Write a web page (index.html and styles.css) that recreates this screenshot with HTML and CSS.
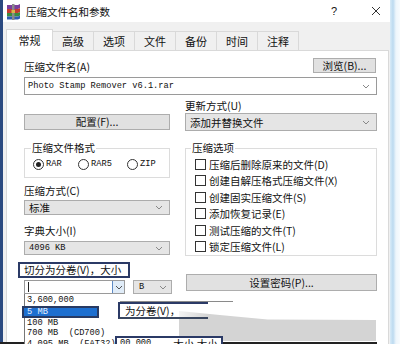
FILE: index.html
```html
<!DOCTYPE html>
<html>
<head>
<meta charset="utf-8">
<link rel="stylesheet" href="styles.css">
</head>
<body>
<div class="screen">
    <div class="edge-left"></div>
    <div class="dialog">
        <div class="titlebar">
            <svg class="app-icon" width="17" height="17" viewBox="0 0 17 17">
                <path d="M2 2h11l2 -1v4l-2 1H2z" fill="#7b3e9c"/>
                <path d="M2 6h11l2 -1v4l-2 1H2z" fill="#c43b32"/>
                <path d="M2 10h11l2 -1v3.5l-2 1H2z" fill="#3b8c3f"/>
                <path d="M2 13.5h11l2 -1v3l-2 1H2z" fill="#2f5db3"/>
                <rect x="7" y="1" width="2.5" height="16" fill="#8a8a8a"/>
                <rect x="6.5" y="7" width="3.5" height="3" fill="#d9b74a"/>
            </svg>
            <span class="title">压缩文件名和参数</span>
            <span class="help">?</span>
            <svg class="close" width="10" height="10" viewBox="0 0 10 10">
                <path d="M1 1l8 8M9 1l-8 8" stroke="#333" stroke-width="1"/>
            </svg>
        </div>
        <div class="tabs">
            <div class="tab active">常规</div>
            <div class="tab">高级</div>
            <div class="tab">选项</div>
            <div class="tab">文件</div>
            <div class="tab">备份</div>
            <div class="tab">时间</div>
            <div class="tab">注释</div>
        </div>
        <div class="page">
            <div class="row-name">
                <span class="lbl">压缩文件名(A)</span>
                <div class="btn browse">浏览(B)...</div>
            </div>
            <div class="combo edit name">
                <span class="mono">Photo Stamp Remover v6.1.rar</span>
                <svg class="chev" width="8" height="5" viewBox="0 0 8 5"><path d="M1 1l3 3 3-3" fill="none" stroke="#888"/></svg>
            </div>
            <div class="cols">
                <div class="col">
                    <div class="btn profile">配置(F)...</div>
                    <div class="group format">
                        <span class="group-title">压缩文件格式</span>
                        <div class="radios">
                            <div class="radio r1"><span class="dot on"></span><span class="mono">RAR</span></div>
                            <div class="radio r2"><span class="dot"></span><span class="mono">RAR5</span></div>
                            <div class="radio"><span class="dot"></span><span class="mono">ZIP</span></div>
                        </div>
                    </div>
                    <div class="lbl method-lbl">压缩方式(C)</div>
                    <div class="combo method">
                        <span>标准</span>
                        <svg class="chev" width="8" height="5" viewBox="0 0 8 5"><path d="M1 1l3 3 3-3" fill="none" stroke="#888"/></svg>
                    </div>
                    <div class="lbl dict-lbl">字典大小(I)</div>
                    <div class="combo dict">
                        <span class="mono">4096 KB</span>
                        <svg class="chev" width="8" height="5" viewBox="0 0 8 5"><path d="M1 1l3 3 3-3" fill="none" stroke="#888"/></svg>
                    </div>
                </div>
                <div class="col">
                    <div class="lbl update-lbl">更新方式(U)</div>
                    <div class="combo update">
                        <span>添加并替换文件</span>
                        <svg class="chev" width="8" height="5" viewBox="0 0 8 5"><path d="M1 1l3 3 3-3" fill="none" stroke="#888"/></svg>
                    </div>
                    <div class="group options">
                        <span class="group-title">压缩选项</span>
                        <div class="check"><span class="box"></span>压缩后删除原来的文件(D)</div>
                        <div class="check"><span class="box"></span>创建自解压格式压缩文件(X)</div>
                        <div class="check"><span class="box"></span>创建固实压缩文件(S)</div>
                        <div class="check"><span class="box"></span>添加恢复记录(E)</div>
                        <div class="check"><span class="box"></span>测试压缩的文件(T)</div>
                        <div class="check"><span class="box"></span>锁定压缩文件(L)</div>
                    </div>
                </div>
            </div>
            <div class="cols bottom">
                <div class="col">
                    <div class="mark">切分为分卷(V)，大小</div>
                    <div class="size-row">
                        <div class="size-wrap">
                            <div class="combo edit size">
                                <span class="caret"></span>
                                <span class="drop-btn">
                                    <svg width="8" height="5" viewBox="0 0 8 5"><path d="M1 1l3 3 3-3" fill="none" stroke="#555"/></svg>
                                </span>
                            </div>
                            <div class="popup">
                                <div class="item">3,600,000</div>
                                <div class="item picked">5 MB</div>
                                <div class="item">100 MB</div>
                                <div class="item">700 MB  (CD700)</div>
                                <div class="item">4,095 MB  (FAT32)</div>
                            </div>
                        </div>
                        <div class="combo unit">
                            <span class="mono">B</span>
                            <svg class="chev" width="8" height="5" viewBox="0 0 8 5"><path d="M1 1l3 3 3-3" fill="none" stroke="#888"/></svg>
                        </div>
                    </div>
                </div>
                <div class="col">
                    <div class="btn password">设置密码(P)...</div>
                </div>
            </div>
            <div class="ghost-line"></div>
            <div class="ghost-mark">为分卷(V)，</div>
            <div class="ghost-band"></div>
            <div class="ghost-low"><span class="mono">00,000</span><span class="low-text">大小 大小</span></div>
        </div>
    </div>
    <div class="edge-right"></div>
    <div class="edge-bottom"></div>
</div>
</body>
</html>
```

FILE: styles.css
```css
* {
    box-sizing: border-box;
}
body {
    margin: 0;
    font-family: "Noto Sans CJK SC", sans-serif;
    font-size: 10.5px;
    color: #111;
}
.screen {
    position: relative;
    width: 400px;
    height: 344px;
    overflow: hidden;
    display: flex;
    background: #f0f0f0;
}
.edge-left {
    width: 3px;
    flex: none;
    background: #2b4a80;
}
.edge-right {
    width: 10px;
    flex: none;
    background: linear-gradient(90deg, #d8ebf8 0%, #bcdaf0 30%, #eef6fc 60%, #f7fbfe 100%);
}
.edge-bottom {
    position: absolute;
    left: 0;
    bottom: 0;
    width: 377px;
    height: 2px;
    background: #222;
}
.dialog {
    width: 387px;
    flex: none;
    background: #f0f0f0;
}
.titlebar {
    height: 22px;
    background: #fff;
    display: flex;
    align-items: center;
}
.app-icon {
    margin-left: 2px;
    margin-top: 1px;
}
.title {
    margin-left: 4px;
    font-size: 10.5px;
}
.help {
    margin-left: auto;
    font-family: "Liberation Sans", sans-serif;
    font-size: 11px;
}
.close {
    margin-left: 34px;
    margin-right: 9px;
}
.tabs {
    display: flex;
    align-items: flex-end;
    height: 28px;
    padding-left: 3px;
    position: relative;
    z-index: 1;
}
.tab {
    height: 19px;
    padding: 0 9px;
    width: 41px;
    border: 1px solid #d9d9d9;
    border-bottom: none;
    border-left: none;
    background: #f0f0f0;
    font-size: 11px;
    line-height: 18px;
    text-align: center;
}
.tab.active {
    width: 47px;
    height: 22px;
    background: #fff;
    border-left: 1px solid #d9d9d9;
    margin-bottom: -1px;
    line-height: 21px;
}
.page {
    position: relative;
    margin-left: 3px;
    width: 383px;
    height: 300px;
    background: #fff;
    border: 1px solid #d9d9d9;
    padding: 7px 11px 0 17px;
}
.mono {
    font-family: "Liberation Mono", monospace;
    font-size: 8.7px;
}
.lbl {
    line-height: 14px;
}
.row-name {
    display: flex;
    align-items: flex-end;
    justify-content: space-between;
    height: 15px;
}
.row-name .lbl {
    line-height: 12px;
}
.btn {
    background: #e1e1e1;
    border: 1px solid #adadad;
    text-align: center;
}
.browse {
    width: 63px;
    height: 15px;
    line-height: 13px;
    margin-right: 1px;
}
.combo {
    display: flex;
    align-items: center;
    justify-content: space-between;
    background: #e5e5e5;
    border: 1px solid #acacac;
    padding: 0 6px 0 4px;
}
.combo.edit {
    background: #fff;
    border-color: #9a9a9a;
}
.name {
    margin-top: 4px;
    height: 18px;
    padding-left: 3px;
}
.cols {
    display: grid;
    grid-template-columns: 146px 192px;
    column-gap: 15px;
}
.col {
    display: flex;
    flex-direction: column;
}
.profile {
    margin-top: 19px;
    height: 16px;
    line-height: 14px;
}
.group {
    border: 1px solid #dcdcdc;
}
.group-title {
    display: inline-block;
    align-self: flex-start;
    margin-top: -8px;
    padding: 0 1px;
    line-height: 14px;
    background: #fff;
}
.format {
    display: flex;
    flex-direction: column;
    margin-top: 18px;
    padding: 0 0 7px 8px;
}
.format .group-title {
    margin-left: -2px;
}
.radios {
    display: flex;
    margin-top: 3px;
    height: 12px;
}
.radio {
    display: flex;
    align-items: center;
    gap: 2px;
}
.r1 {
    width: 45px;
}
.r2 {
    width: 49px;
}
.dot {
    width: 11px;
    height: 11px;
    border: 1px solid #333;
    border-radius: 50%;
    display: flex;
    align-items: center;
    justify-content: center;
}
.dot.on::after {
    content: "";
    width: 5px;
    height: 5px;
    border-radius: 50%;
    background: #222;
}
.method-lbl {
    margin-top: 6px;
}
.method {
    margin-top: 2px;
    height: 15px;
}
.dict-lbl {
    margin-top: 9px;
}
.dict {
    margin-top: 3px;
    height: 14px;
}
.update-lbl {
    margin-top: 4px;
}
.update {
    height: 18px;
}
.options {
    display: flex;
    flex-direction: column;
    margin-top: 17px;
    height: 108px;
    padding-left: 9px;
}
.options .group-title {
    margin-left: -4px;
    margin-bottom: 1px;
}
.check {
    display: flex;
    align-items: center;
    height: 16.6px;
}
.box {
    width: 11px;
    height: 11px;
    border: 1px solid #333;
    margin-right: 3px;
}
.bottom {
    margin-top: 6px;
}
.mark {
    margin-left: -6px;
    width: 112px;
    height: 16px;
    border: 2px solid #2b3a66;
    line-height: 12px;
    padding-left: 4px;
    font-size: 10.5px;
}
.size-row {
    display: flex;
    margin-top: 2px;
    gap: 8px;
}
.size-wrap {
    position: relative;
}
.size {
    width: 101px;
    height: 14px;
    padding: 0;
    border-color: #3569b0;
}
.caret {
    width: 1px;
    height: 10px;
    margin-left: 3px;
    background: #222;
}
.drop-btn {
    width: 12px;
    height: 12px;
    display: flex;
    align-items: center;
    justify-content: center;
    background: #e0ecf8;
    border-left: 1px solid #5d8ac4;
}
.unit {
    width: 39px;
    height: 14px;
    padding: 0 4px 0 5px;
    flex: none;
}
.popup {
    position: absolute;
    left: 0;
    top: 14px;
    width: 96px;
    height: 60px;
    background: #fff;
    border-left: 1px solid #777;
    padding-top: 1px;
    z-index: 2;
}
.item {
    height: 10.5px;
    line-height: 10.5px;
    padding-left: 2px;
    font-family: "Liberation Mono", monospace;
    font-size: 8.7px;
    white-space: pre;
}
.item.picked {
    margin-left: -3px;
    width: 77px;
    height: 12px;
    line-height: 8px;
    padding-left: 3px;
    background: #1d6fd0;
    border: 2px solid #283a63;
    color: #e8f0ff;
}
.password {
    margin-top: 12px;
    margin-left: 1px;
    height: 17px;
    line-height: 15px;
}
.ghost-line {
    position: absolute;
    left: 90px;
    top: 250px;
    width: 136px;
    height: 1px;
    background: #8a8a8a;
}
.ghost-mark {
    position: absolute;
    left: 111px;
    top: 251px;
    width: 90px;
    height: 17px;
    padding-left: 5px;
    line-height: 14px;
    border-left: 2px solid #2b3a66;
    border-top: 2px solid #2b3a66;
    border-bottom: 2px solid #39465f;
    background: linear-gradient(90deg, #fff 55%, rgba(255, 255, 255, 0) 100%);
    z-index: 3;
}
.ghost-band {
    position: absolute;
    left: 172px;
    top: 260px;
    width: 197px;
    height: 30px;
    background: #d4d4d4;
    clip-path: polygon(0 0, 22% 14%, 45% 28%, 100% 30%, 100% 100%, 0 100%);
    z-index: 1;
}
.ghost-low {
    position: absolute;
    left: 108px;
    top: 285px;
    width: 108px;
    height: 12px;
    border: 2px solid #2b3a66;
    border-bottom: none;
    background: #fff;
    display: flex;
    align-items: center;
    padding-left: 3px;
    z-index: 3;
}
.low-text {
    margin-left: 22px;
}
```
